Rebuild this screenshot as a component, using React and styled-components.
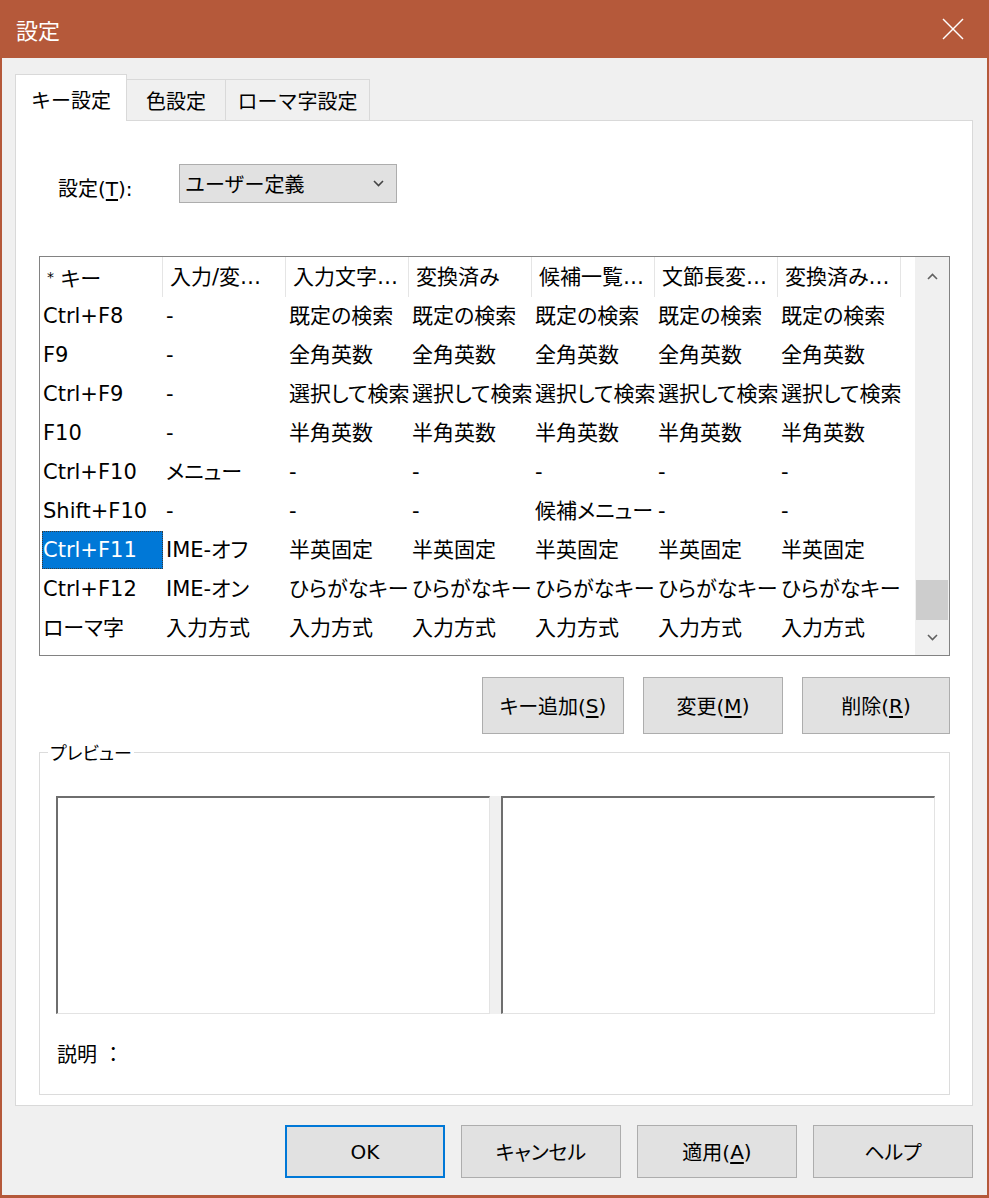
import React from "react";
import styled, { createGlobalStyle } from "styled-components";

const UI_FONT = `"DejaVu Sans", "Noto Sans CJK JP", sans-serif`;

const GlobalStyle = createGlobalStyle`
  html, body {
    margin: 0;
    padding: 0;
    background: #b5593a;
  }
  * {
    box-sizing: border-box;
  }
`;

const headers = ["入力/変…", "入力文字…", "変換済み", "候補一覧…", "文節長変…", "変換済み…"];

const fill = (v) => [v, v, v, v, v];

const rows = [
  ["Ctrl+F8", "-", ...fill("既定の検索")],
  ["F9", "-", ...fill("全角英数")],
  ["Ctrl+F9", "-", ...fill("選択して検索")],
  ["F10", "-", ...fill("半角英数")],
  ["Ctrl+F10", "メニュー", "-", "-", "-", "-", "-"],
  ["Shift+F10", "-", "-", "-", "候補メニュー", "-", "-"],
  ["Ctrl+F11", "IME-オフ", ...fill("半英固定")],
  ["Ctrl+F12", "IME-オン", ...fill("ひらがなキー")],
  ["ローマ字", "入力方式", ...fill("入力方式")],
];

const SELECTED_ROW = 6;

const Chevron = ({ up, color = "#606060" }) => (
  <svg width="11" height="7" viewBox="0 0 11 7">
    <polyline
      points={up ? "1,6 5.5,1.5 10,6" : "1,1 5.5,5.5 10,1"}
      fill="none"
      stroke={color}
      strokeWidth="1.6"
    />
  </svg>
);

const SettingsDialog = () => {
  return (
    <Window>
      <GlobalStyle />
      <TitleBar>
        <span>設定</span>
        <svg width="22" height="22" viewBox="0 0 22 22">
          <line x1="1" y1="1" x2="21" y2="21" stroke="#fff" strokeWidth="1.5" />
          <line x1="21" y1="1" x2="1" y2="21" stroke="#fff" strokeWidth="1.5" />
        </svg>
      </TitleBar>

      <Body>
        <TabBar>
          <Tab $active $w={112}>キー設定</Tab>
          <Tab $w={100}>色設定</Tab>
          <Tab $w={145}>ローマ字設定</Tab>
        </TabBar>

        <Panel>
          <SettingsRow>
            <FieldLabel>
              設定(<u>T</u>):
            </FieldLabel>
            <Select>
              <span>ユーザー定義</span>
              <Chevron color="#444" />
            </Select>
          </SettingsRow>

          <ListBox>
            <Grid>
              <HeaderRow>
                <HeaderCell>
                  <Star>*</Star> キー
                </HeaderCell>
                {headers.map((h, i) => (
                  <HeaderCell key={i}>{h}</HeaderCell>
                ))}
              </HeaderRow>
              {rows.map((row, r) => (
                <Row key={r}>
                  {row.map((val, c) =>
                    r === SELECTED_ROW && c === 0 ? (
                      <Cell key={c}>
                        <Highlight>{val}</Highlight>
                      </Cell>
                    ) : (
                      <Cell key={c}>{val}</Cell>
                    )
                  )}
                </Row>
              ))}
            </Grid>
            <ScrollBar>
              <ScrollButton $h={38}>
                <Chevron up />
              </ScrollButton>
              <Track>
                <Thumb />
              </Track>
              <ScrollButton $h={35}>
                <Chevron />
              </ScrollButton>
            </ScrollBar>
          </ListBox>

          <ActionRow>
            <Button $w={142} $h={57}>
              キー追加(<u>S</u>)
            </Button>
            <Button $w={140} $h={57}>
              変更(<u>M</u>)
            </Button>
            <Button $w={148} $h={57}>
              削除(<u>R</u>)
            </Button>
          </ActionRow>

          <GroupBox>
            <Legend>プレビュー</Legend>
            <PreviewArea>
              <PreviewPane />
              <Splitter />
              <PreviewPane />
            </PreviewArea>
            <Description>説明 ：</Description>
          </GroupBox>
        </Panel>

        <Footer>
          <Button $w={160} $h={53} $default>
            OK
          </Button>
          <Button $w={160} $h={53}>
            キャンセル
          </Button>
          <Button $w={160} $h={53}>
            適用(<u>A</u>)
          </Button>
          <Button $w={160} $h={53}>
            ヘルプ
          </Button>
        </Footer>
      </Body>
    </Window>
  );
};

export default function App() {
  return <SettingsDialog />;
}

const Window = styled.div`
  width: 989px;
  height: 1198px;
  background: #b5593a;
  padding: 0 2px 3px;
  display: flex;
  flex-direction: column;
  font-family: ${UI_FONT};
  color: #000;
  overflow: hidden;
`;

const TitleBar = styled.div`
  height: 58px;
  flex-shrink: 0;
  display: flex;
  align-items: center;
  justify-content: space-between;
  padding: 0 23px 0 14px;
  color: #fff;
  font-family: "Noto Sans CJK JP", sans-serif;
  font-size: 22px;
`;

const Body = styled.div`
  flex: 1;
  background: #f0f0f0;
  padding: 16px 14px 17px 13px;
  display: flex;
  flex-direction: column;
`;

const TabBar = styled.div`
  display: flex;
  align-items: flex-end;
  height: 47px;
  margin-bottom: -1px;
  position: relative;
  z-index: 1;
`;

const Tab = styled.div`
  width: ${(p) => p.$w}px;
  height: ${(p) => (p.$active ? 47 : 41)}px;
  margin-bottom: ${(p) => (p.$active ? 0 : 1)}px;
  background: ${(p) => (p.$active ? "#fff" : "#f0f0f0")};
  border: 1px solid #d9d9d9;
  border-bottom: none;
  display: flex;
  align-items: center;
  justify-content: center;
  font-family: "Noto Sans CJK JP", sans-serif;
  font-size: 20px;
  padding-top: ${(p) => (p.$active ? 2 : 0)}px;
  & + & {
    margin-left: -1px;
  }
`;

const Panel = styled.div`
  flex-shrink: 0;
  background: #fff;
  border: 1px solid #d9d9d9;
  padding: 43px 22px 10px 23px;
  display: flex;
  flex-direction: column;
`;

const SettingsRow = styled.div`
  display: flex;
  align-items: center;
  height: 39px;
`;

const FieldLabel = styled.div`
  width: 140px;
  padding: 8px 0 0 19px;
  font-size: 20px;
  u {
    text-underline-offset: 3px;
  }
`;

const Select = styled.div`
  width: 218px;
  height: 39px;
  background: #e1e1e1;
  border: 1px solid #adadad;
  display: flex;
  align-items: center;
  justify-content: space-between;
  padding: 0 12px 0 5px;
  font-size: 20px;
`;

const ListBox = styled.div`
  margin-top: 53px;
  height: 400px;
  border: 1px solid #828282;
  background: #fff;
  display: flex;
`;

const Grid = styled.div`
  flex: 1;
  overflow: hidden;
  font-size: 21px;
  font-feature-settings: "palt";
`;

const HeaderRow = styled.div`
  display: flex;
  height: 40px;
`;

const HeaderCell = styled.div`
  width: 123px;
  flex-shrink: 0;
  border-right: 1px solid #e5e5e5;
  padding-left: 7px;
  line-height: 40px;
  white-space: nowrap;
  overflow: hidden;
`;

const Star = styled.span`
  font-size: 14px;
  vertical-align: 4px;
`;

const Row = styled.div`
  display: flex;
  height: 39px;
`;

const Cell = styled.div`
  width: 123px;
  flex-shrink: 0;
  padding-left: 3px;
  line-height: 39px;
  white-space: nowrap;
  overflow: hidden;
`;

const Highlight = styled.div`
  margin-left: -1px;
  padding-left: 1px;
  line-height: 38px;
  background: #0078d7;
  color: #fff;
  outline: 1px dotted #3a3a3a;
  outline-offset: -1px;
`;

const ScrollBar = styled.div`
  width: 34px;
  background: #f0f0f0;
  display: flex;
  flex-direction: column;
`;

const ScrollButton = styled.div`
  height: ${(p) => p.$h}px;
  display: flex;
  align-items: center;
  justify-content: center;
`;

const Track = styled.div`
  flex: 1;
  display: flex;
  flex-direction: column;
  justify-content: flex-end;
`;

const Thumb = styled.div`
  height: 40px;
  margin: 0 1px;
  background: #cdcdcd;
`;

const ActionRow = styled.div`
  margin-top: 21px;
  display: flex;
  justify-content: flex-end;
  gap: 19px;
`;

const Button = styled.div`
  width: ${(p) => p.$w}px;
  height: ${(p) => p.$h}px;
  background: #e1e1e1;
  border: ${(p) => (p.$default ? "2px solid #0078d7" : "1px solid #adadad")};
  display: flex;
  align-items: center;
  justify-content: center;
  font-size: 20px;
  font-feature-settings: "palt";
  u {
    text-underline-offset: 3px;
  }
`;

const GroupBox = styled.fieldset`
  margin: 6px 0 0;
  min-width: 0;
  border: 1px solid #dcdcdc;
  padding: 32px 14px 27px 16px;
`;

const Legend = styled.legend`
  margin-left: -8px;
  padding: 0 2px;
  font-family: "Noto Sans CJK JP", sans-serif;
  font-size: 18px;
  line-height: 24px;
  font-feature-settings: "palt";
`;

const PreviewArea = styled.div`
  display: grid;
  grid-template-columns: 1fr 11px 1fr;
  height: 218px;
`;

const PreviewPane = styled.div`
  background: #fff;
  border-top: 2px solid #6e6e6e;
  border-left: 2px solid #6e6e6e;
  border-right: 1px solid #e3e3e3;
  border-bottom: 1px solid #e3e3e3;
`;

const Splitter = styled.div`
  background: #f0f0f0;
`;

const Description = styled.div`
  margin-top: 29px;
  line-height: 24px;
  padding-left: 1px;
  font-size: 20px;
`;

const Footer = styled.div`
  margin-top: 19px;
  display: flex;
  justify-content: flex-end;
  gap: 16px;
`;
